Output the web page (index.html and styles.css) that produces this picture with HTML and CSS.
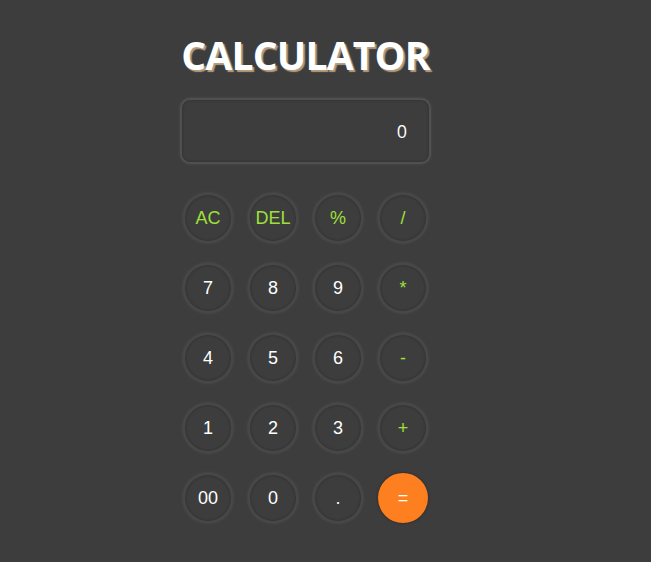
FILE: index.html
```html
<!DOCTYPE html>
<html>
<head>
<meta charset="utf-8">
<link rel="stylesheet" href="styles.css">
</head>
<body>
<div class="calc">
  <h1 class="title">CALCULATOR</h1>
  <div class="display">0</div>
  <div class="keys">
    <button class="key op">AC</button>
    <button class="key op">DEL</button>
    <button class="key op">%</button>
    <button class="key op">/</button>
    <button class="key">7</button>
    <button class="key">8</button>
    <button class="key">9</button>
    <button class="key op">*</button>
    <button class="key">4</button>
    <button class="key">5</button>
    <button class="key">6</button>
    <button class="key op">-</button>
    <button class="key">1</button>
    <button class="key">2</button>
    <button class="key">3</button>
    <button class="key op">+</button>
    <button class="key">00</button>
    <button class="key">0</button>
    <button class="key">.</button>
    <button class="key eq">=</button>
  </div>
</div>
</body>
</html>
```
FILE: styles.css
```css
html, body {
  margin: 0;
  padding: 0;
  background: #3d3d3d;
  height: 100%;
}
.calc {
  width: 251px;
  margin-left: 180px;
  padding-top: 30px;
  display: flex;
  flex-direction: column;
}
.title {
  margin: 0;
  font-family: "Open Sans", "Noto Sans", sans-serif;
  font-weight: 700;
  font-size: 39px;
  line-height: 50px;
  color: #ffffff;
  letter-spacing: -0.8px;
  text-align: center;
  text-shadow: 2px 2px 1px #b89c7c;
}
.display {
  margin-top: 18px;
  height: 66px;
  box-sizing: border-box;
  border: 2px solid #505050;
  border-radius: 10px;
  box-shadow: 0 0 3px rgba(255,255,255,0.1), inset 0 0 3px rgba(0,0,0,0.25);
  display: flex;
  align-items: center;
  justify-content: flex-end;
  padding-right: 22px;
  font-family: "Open Sans", "Noto Sans", sans-serif;
  font-size: 18px;
  color: #ffffff;
}
.keys {
  margin-top: 29px;
  padding: 0 3px;
  display: grid;
  grid-template-columns: repeat(4, 50px);
  justify-content: space-between;
  row-gap: 20px;
}
.key {
  width: 50px;
  height: 50px;
  border-radius: 50%;
  border: 2px solid #474747;
  background: #3d3d3d;
  box-shadow: 0 0 3px rgba(255,255,255,0.13), inset 0 0 3px rgba(0,0,0,0.3);
  color: #ffffff;
  font-family: "Liberation Sans", Arial, sans-serif;
  font-size: 18px;
  padding: 0;
  display: flex;
  align-items: center;
  justify-content: center;
}
.key.op {
  color: #9de03a;
}
.key.eq {
  background: #fd7f1f;
  border-color: #fd7f1f;
  box-shadow: 0 0 3px rgba(0,0,0,0.4);
  color: #ffffff;
}
```
